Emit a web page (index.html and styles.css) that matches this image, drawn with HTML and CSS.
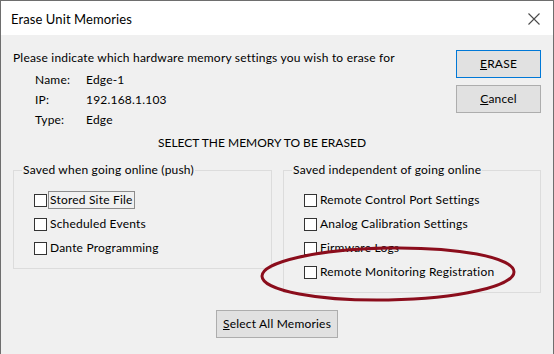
FILE: index.html
```html
<!DOCTYPE html>
<html lang="en">
<head>
    <meta charset="UTF-8">
    <title>Erase Unit Memories</title>
    <link rel="stylesheet" href="styles.css">
</head>
<body>
    <div class="dialog">
        <div class="titlebar">
            <span class="title">Erase Unit Memories</span>
            <svg class="close" width="12" height="12" viewBox="0 0 12 12">
                <path d="M0.5 0.5 L11.5 11.5 M11.5 0.5 L0.5 11.5" stroke="#4a4a4a" stroke-width="1.1" fill="none"/>
            </svg>
        </div>

        <div class="content">
            <div class="top">
                <div class="info">
                    <p class="intro">Please indicate which hardware memory settings you wish to erase for</p>
                    <div class="unit">
                        <span>Name:</span><span>Edge-1</span>
                        <span>IP:</span><span>192.168.1.103</span>
                        <span>Type:</span><span>Edge</span>
                    </div>
                </div>
                <div class="actions">
                    <button class="btn btn-default"><u>E</u>RASE</button>
                    <button class="btn"><u>C</u>ancel</button>
                </div>
            </div>

            <div class="heading">SELECT THE MEMORY TO BE ERASED</div>

            <div class="groups">
                <div class="group group-push">
                    <div class="group-title">Saved when going online (push)</div>
                    <label class="check"><span class="box"></span><span class="text focused">Stored Site File</span></label>
                    <label class="check"><span class="box"></span><span class="text">Scheduled Events</span></label>
                    <label class="check"><span class="box"></span><span class="text">Dante Programming</span></label>
                </div>
                <div class="group group-local">
                    <div class="group-title">Saved independent of going online</div>
                    <label class="check"><span class="box"></span><span class="text">Remote Control Port Settings</span></label>
                    <label class="check"><span class="box"></span><span class="text">Analog Calibration Settings</span></label>
                    <label class="check"><span class="box"></span><span class="text">Firmware Logs</span></label>
                    <label class="check"><span class="box"></span><span class="text">Remote Monitoring Registration</span></label>
                </div>
            </div>

            <div class="footer">
                <button class="btn btn-wide"><u>S</u>elect All Memories</button>
            </div>

            <!-- hand drawn highlight around the last option -->
            <svg class="annotation" width="270" height="64" viewBox="0 0 270 64">
                <ellipse cx="134" cy="32" rx="126" ry="26" transform="rotate(-1 134 32)" fill="none" stroke="#8b0d1c" stroke-width="3"/>
            </svg>
        </div>
    </div>
</body>
</html>
```

FILE: styles.css
```css
* {
    box-sizing: border-box;
}
body {
    margin: 0;
    font-family: Lato, "Noto Sans", sans-serif;
    font-size: 12px;
    letter-spacing: 0.2px;
    color: #000;
}
.dialog {
    width: 554px;
    height: 354px;
    border: 1px solid #6e6e6e;
    border-bottom: none;
    background: #f0f0f0;
    display: flex;
    flex-direction: column;
}
.titlebar {
    height: 34px;
    background: #fff;
    display: flex;
    align-items: center;
    justify-content: space-between;
    padding: 0 13px 0 10px;
}
.title {
    font-size: 13px;
    letter-spacing: 0.1px;
    margin-top: 1px;
}
.close {
    display: block;
    margin-top: 2px;
}
.content {
    position: relative;
    flex: 1;
    padding: 15px 12px 0 12px;
}
.top {
    display: flex;
    justify-content: space-between;
}
.intro {
    margin: 0;
    line-height: 16px;
}
.unit {
    display: grid;
    grid-template-columns: 51px auto;
    grid-auto-rows: 20px;
    align-items: center;
    margin: 3px 0 0 22px;
}
.actions {
    display: flex;
    flex-direction: column;
    gap: 7px;
}
.btn {
    font-family: inherit;
    font-size: 12px;
    letter-spacing: inherit;
    color: #000;
    background: #e1e1e1;
    border: 1px solid #adadad;
    height: 28px;
    width: 85px;
    padding: 0 0 2px;
}
.btn-default {
    border-color: #0078d7;
}
.btn-wide {
    width: 122px;
}
.heading {
    line-height: 20px;
    margin-top: 4px;
    padding-right: 30px;
    text-align: center;
    letter-spacing: 0;
}
.groups {
    display: flex;
    align-items: flex-start;
    gap: 11px;
    margin-top: 17px;
}
.group {
    border: 1px solid #dcdcdc;
    padding: 0 0 8px 20px;
}
.group-title {
    width: fit-content;
    margin: -9px 0 10px -12px;
    padding: 0 1px;
    line-height: 16px;
    background: #f0f0f0;
}
.group-push {
    width: 259px;
}
.group-local {
    width: 258px;
}
.check {
    display: flex;
    align-items: center;
    height: 24px;
}
.box {
    width: 13px;
    height: 13px;
    border: 1px solid #333;
    background: #fff;
    margin-right: 1px;
}
.text {
    border: 1px solid transparent;
    line-height: 16px;
    padding: 0 1px;
}
.text.focused {
    border-color: #8c8c8c;
}
.footer {
    display: flex;
    justify-content: center;
    margin-top: 17px;
}
.annotation {
    position: absolute;
    left: 253px;
    top: 207px;
}
```
